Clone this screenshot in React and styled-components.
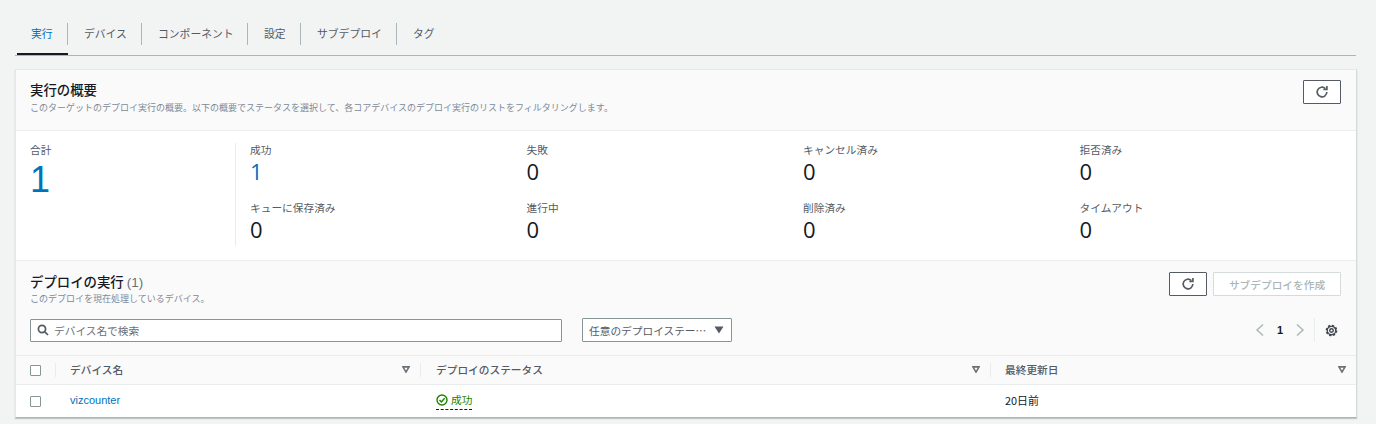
import React from "react";
import styled, { createGlobalStyle } from "styled-components";

const Global = createGlobalStyle`
  html, body { margin: 0; padding: 0; background: #f2f3f3; }
  body { font-family: "Noto Sans CJK JP", "Liberation Sans", sans-serif; color: #16191f; }
  * { box-sizing: border-box; }
`;
const Page = styled.div`
  width: 1376px; height: 424px; overflow: hidden;
  padding: 16px 20px 0 15px;
`;
const Tabs = styled.div`
  display: flex; height: 40px; border-bottom: 1px solid #aab7b8; padding-left: 2px;
`;
const Tab = styled.div`
  position: relative; height: 39px; width: ${p => p.$w}px;
  display: flex; align-items: center; padding: 0 0 5px ${p => p.$active ? 14 : 16}px;
  font-size: 10.8px; color: ${p => p.$active ? "#0073bb" : "#545b64"};
  ${p => p.$active && "box-shadow: inset 0 -2px 0 #16191f;"}
  &:not(:last-child)::after {
    content: ""; position: absolute; right: 0; top: 7px; height: 22px; width: 1px; background: #aab7b8;
  }
`;
const Card = styled.div`
  margin-top: 13px; width: 1342px; height: 349px; background: #fff;
  border: 1px solid #e6e8e8; border-bottom: 1px solid #aab7b8; border-right: 1px solid #d5dbdb;
  box-shadow: 0 1px 1px rgba(0,28,36,.2);
`;
const Header = styled.div`
  background: #fafafa; border-bottom: 1px solid #eaeded;
  display: flex; justify-content: space-between;
  height: ${p => p.$h}px; padding: ${p => p.$pt}px 15px 0 14px;
`;
const Title = styled.div`
  font-size: 13.4px; line-height: 19px; color: #16191f; font-weight: 500;
  span { color: #687078; font-weight: 400; font-family: "Liberation Sans", sans-serif; }
`;
const Desc = styled.div`
  font-size: 9px; line-height: 14px; color: #7d8998; margin-top: ${p => p.$mt ?? 0}px;
`;
const Buttons = styled.div`display: flex; gap: 6px;`;
const Btn = styled.div`
  height: 24px; width: ${p => p.$w}px; border: 1px solid ${p => p.$disabled ? "#d5dbdb" : "#545b64"};
  background: #fff; display: flex; align-items: center; justify-content: center;
  font-size: 10.7px; font-weight: 500; color: ${p => p.$disabled ? "#aab7b8" : "#545b64"};
  border-radius: 1px;
`;
const Stats = styled.div`
  display: flex; height: 130px; padding: 12px 0 0 14px; border-bottom: 1px solid #eaeded;
`;
const Total = styled.div`width: 205px;`;
const Grid = styled.div`
  border-left: 1px solid #eaeded; height: 103px; padding-left: 14px;
  display: grid; grid-template-columns: repeat(4, 276.5px); grid-auto-rows: 58px;
`;
const Label = styled.div`
  font-size: 10.7px; line-height: 14px; color: #545b64;
`;
const Value = styled.div`
  font-family: "Open Sans", "Liberation Sans", sans-serif;
  font-size: 22px; line-height: 26px; margin-top: 1px;
  color: ${p => p.$link ? "#0073bb" : "#16191f"};
`;
const BigValue = styled.div`
  font-family: "Liberation Sans", sans-serif;
  font-size: 36px; line-height: 42px; margin-top: 2px; color: #0073bb;
`;
const Section = styled.div`background: #fafafa; height: 95px; border-bottom: 1px solid #eaeded; padding: 11px 15px 0 14px;`;
const SectionTop = styled.div`display: flex; justify-content: space-between; height: 46px;`;
const Filters = styled.div`display: flex; align-items: center; height: 24px;`;
const Search = styled.div`
  width: 532px; height: 23px; background: #fff; border: 1px solid #879596; border-radius: 1px;
  display: flex; align-items: center; gap: 5px; padding-left: 6px;
  font-size: 10.7px; color: #687078;
`;
const Select = styled.div`
  margin-left: 20px; width: 150px; height: 24px; background: #fff; border: 1px solid #879596; border-radius: 1px;
  display: flex; align-items: center; justify-content: space-between; padding: 0 7px 0 6px;
  font-size: 10.7px; color: #545b64; white-space: nowrap;
`;
const Pager = styled.div`
  margin-left: auto; display: flex; align-items: center; height: 24px; padding-right: 3px;
  font-family: "Liberation Sans", sans-serif; font-size: 11px; font-weight: 700;
`;
const PagerNum = styled.span`margin: 0 13px; color: #16191f;`;
const PagerDivider = styled.div`width: 1px; height: 24px; background: #eaeded; margin: 0 10px 0 9px;`;
const Row = styled.div`
  display: grid; grid-template-columns: 39px 365px 570px 1fr; align-items: center;
  height: ${p => p.$h}px;
  background: ${p => p.$head ? "#fafafa" : "#fff"};
  border-bottom: ${p => p.$head ? "1px solid #eaeded" : "none"};
`;
const CheckCell = styled.div`padding-left: 14px; display: flex;`;
const Check = styled.div`width: 11px; height: 11px; border: 1px solid #879596; background: #fff; border-radius: 1px;`;
const HeadCell = styled.div`
  position: relative; height: 100%; display: flex; align-items: center; justify-content: space-between;
  padding: 0 10px 1px ${p => p.$pl ?? 15}px;
  font-size: 10.7px; font-weight: 500; color: #545b64;
  &::before { content: ""; position: absolute; left: 0; top: 7px; height: 14px; width: 1px; background: #eaeded; }
`;
const Cell = styled.div`
  padding: 0 0 3px ${p => p.$pl ?? 15}px; font-size: 10.9px; color: #16191f; display: flex;
`;
const DeviceLink = styled.span`
  font-family: "Liberation Sans", sans-serif; font-size: 11px; color: #0073bb;
`;
const Status = styled.span`
  display: inline-flex; align-items: center; gap: 3px; color: #1d8102; font-size: 10.7px; line-height: 16px;
  border-bottom: 1px dashed #16191f; padding-bottom: 1px; margin-top: 2px;
`;

const Refresh = () => (
  <svg width="14" height="14" viewBox="0 0 16 16" fill="none" stroke="#545b64" strokeWidth="1.9">
    <path d="M13.5 8a5.5 5.5 0 1 1-1.7-4" />
    <path d="M13.6 1v4h-4" />
  </svg>
);
const SortIcon = () => (
  <svg width="8" height="7" viewBox="0 0 9 8"><path d="M1 1h7L4.5 7z" fill="none" stroke="#687078" strokeWidth="1.8" /></svg>
);
const Chevron = ({ dir }) => (
  <svg width="9" height="14" viewBox="0 0 9 14" fill="none" stroke="#aab7b8" strokeWidth="1.5">
    <path d={dir === "l" ? "M8 1.5 2 7l6 5.5" : "M1 1.5 7 7l-6 5.5"} />
  </svg>
);
const Gear = () => (
  <svg width="13" height="13" viewBox="0 0 16 16" fill="none" stroke="#414750">
    <circle cx="8" cy="8" r="2.2" strokeWidth="1.7" />
    <circle cx="8" cy="8" r="5.9" strokeWidth="2.6" strokeDasharray="2.6 2" />
    <circle cx="8" cy="8" r="5.2" strokeWidth="1.6" />
  </svg>
);
const SearchIcon = () => (
  <svg width="12" height="12" viewBox="0 0 12 12" fill="none" stroke="#545b64" strokeWidth="1.7">
    <circle cx="5" cy="5" r="3.6" /><path d="M7.8 7.8 11 11" />
  </svg>
);
const Caret = () => (
  <svg width="10" height="8" viewBox="0 0 10 8"><path d="M.5.5h9L5 7.5z" fill="#545b64" /></svg>
);
const OkIcon = () => (
  <svg width="12" height="12" viewBox="0 0 12 12" fill="none" stroke="#1d8102" strokeWidth="1.4">
    <circle cx="6" cy="6" r="5" /><path d="M3.5 6 5.4 8 8.6 4.3" />
  </svg>
);

const tabs = [["実行", 51], ["デバイス", 74], ["コンポーネント", 106], ["設定", 53], ["サブデプロイ", 96], ["タグ", 60]];
const stats = [
  ["成功", "1", true], ["失敗", "0"], ["キャンセル済み", "0"], ["拒否済み", "0"],
  ["キューに保存済み", "0"], ["進行中", "0"], ["削除済み", "0"], ["タイムアウト", "0"],
];

export default function App() {
  return (
    <Page>
      <Global />
      <Tabs>
        {tabs.map(([t, w], i) => <Tab key={t} $w={w} $active={i === 0}>{t}</Tab>)}
      </Tabs>
      <Card>
        <Header $h={61} $pt={10}>
          <div>
            <Title>実行の概要</Title>
            <Desc $mt={2}>このターゲットのデプロイ実行の概要。以下の概要でステータスを選択して、各コアデバイスのデプロイ実行のリストをフィルタリングします。</Desc>
          </div>
          <Btn $w={38}><Refresh /></Btn>
        </Header>
        <Stats>
          <Total>
            <Label>合計</Label>
            <BigValue>1</BigValue>
          </Total>
          <Grid>
            {stats.map(([l, v, link]) => (
              <div key={l}><Label>{l}</Label><Value $link={link}>{v}</Value></div>
            ))}
          </Grid>
        </Stats>
        <Section>
          <SectionTop>
            <div>
              <Title>デプロイの実行 <span>(1)</span></Title>
              <Desc>このデプロイを現在処理しているデバイス。</Desc>
            </div>
            <Buttons>
              <Btn $w={38}><Refresh /></Btn>
              <Btn $w={128} $disabled>サブデプロイを作成</Btn>
            </Buttons>
          </SectionTop>
          <Filters>
            <Search><SearchIcon />デバイス名で検索</Search>
            <Select>任意のデプロイステー…<Caret /></Select>
            <Pager>
              <Chevron dir="l" /><PagerNum>1</PagerNum><Chevron dir="r" />
              <PagerDivider /><Gear />
            </Pager>
          </Filters>
        </Section>
        <Row $head $h={29}>
          <CheckCell><Check /></CheckCell>
          <HeadCell>デバイス名<SortIcon /></HeadCell>
          <HeadCell $pl={16}>デプロイのステータス<SortIcon /></HeadCell>
          <HeadCell>最終更新日<SortIcon /></HeadCell>
        </Row>
        <Row $h={32}>
          <CheckCell><Check /></CheckCell>
          <Cell><DeviceLink>vizcounter</DeviceLink></Cell>
          <Cell $pl={16}><Status><OkIcon />成功</Status></Cell>
          <Cell>20日前</Cell>
        </Row>
      </Card>
    </Page>
  );
}
